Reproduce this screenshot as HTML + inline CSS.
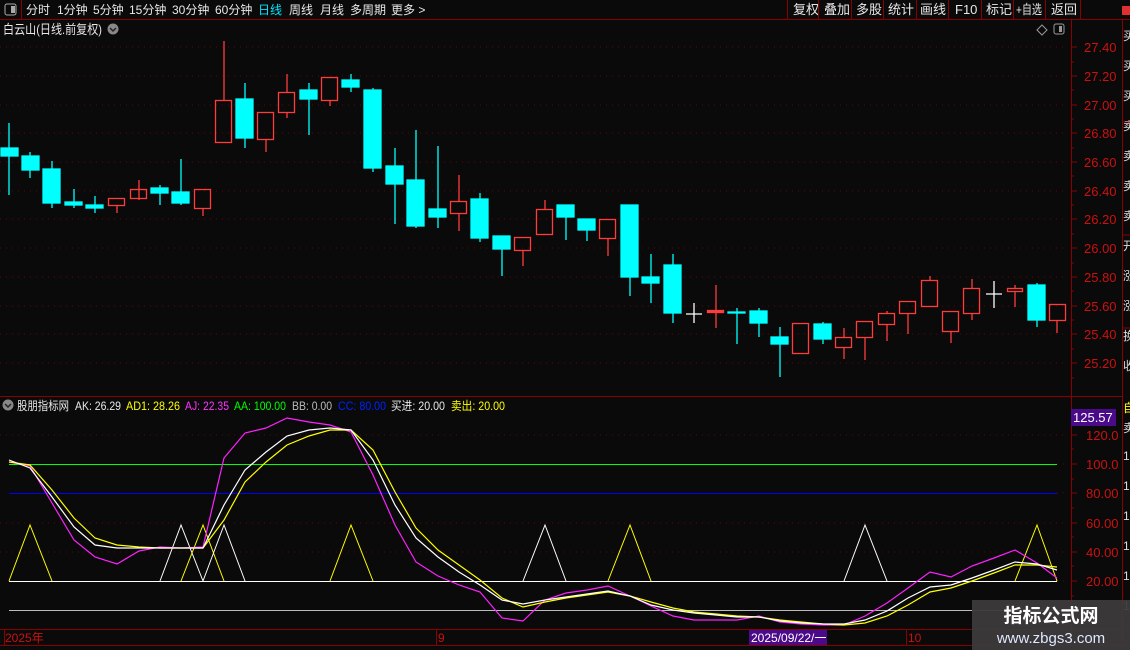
<!DOCTYPE html><html><head><meta charset="utf-8"><style>
body{margin:0;background:#0a0a0a;width:1130px;height:650px;overflow:hidden;font-family:"Liberation Sans","Noto Sans CJK SC",sans-serif}
svg{display:block}
</style></head><body>
<svg width="1130" height="650" xmlns="http://www.w3.org/2000/svg" font-family="Liberation Sans, Noto Sans CJK SC, sans-serif">
<rect width="1130" height="650" fill="#0a0a0a"/>
<line x1="0" y1="19.5" x2="1130" y2="19.5" stroke="#8a0000"/>
<line x1="21.5" y1="0" x2="21.5" y2="19" stroke="#8a0000"/>
<rect x="5" y="4" width="11" height="11" rx="2" fill="none" stroke="#aaa"/><rect x="11" y="6" width="4" height="7" fill="#aaa"/>
<g font-size="12" fill="#e8e8e8">
<text x="26" y="14">分时</text><text x="57" y="14">1分钟</text><text x="93" y="14">5分钟</text><text x="129" y="14">15分钟</text><text x="172" y="14">30分钟</text><text x="215" y="14">60分钟</text>
<text x="258" y="14" fill="#00e5ff">日线</text><text x="289" y="14">周线</text><text x="320" y="14">月线</text><text x="350" y="14">多周期</text><text x="391" y="14">更多 &gt;</text>
</g>
<g font-size="13" fill="#e8e8e8">
<text x="793" y="14">复权</text><text x="824" y="14">叠加</text><text x="856" y="14">多股</text><text x="888" y="14">统计</text><text x="920" y="14">画线</text><text x="955" y="14">F10</text><text x="986" y="14">标记</text><text x="1016" y="14" textLength="26" lengthAdjust="spacingAndGlyphs">+自选</text><text x="1051" y="14">返回</text>
</g>
<g stroke="#8a0000"><line x1="787.5" y1="0" x2="787.5" y2="19"/><line x1="818.5" y1="0" x2="818.5" y2="19"/><line x1="851.5" y1="0" x2="851.5" y2="19"/><line x1="883.5" y1="0" x2="883.5" y2="19"/><line x1="916.5" y1="0" x2="916.5" y2="19"/><line x1="948.5" y1="0" x2="948.5" y2="19"/><line x1="981.5" y1="0" x2="981.5" y2="19"/><line x1="1013.5" y1="0" x2="1013.5" y2="19"/><line x1="1045.5" y1="0" x2="1045.5" y2="19"/><line x1="1080.5" y1="0" x2="1080.5" y2="19"/></g>
<rect x="1122" y="6" width="8" height="9" fill="#e03030"/>
<text x="3" y="34" font-size="13" fill="#e8e8e8" textLength="99" lengthAdjust="spacingAndGlyphs">白云山(日线.前复权)</text>
<circle cx="113" cy="29" r="5.5" fill="#888"/><path d="M110 28l3 3 3-3" stroke="#222" fill="none" stroke-width="1.5"/>
<path d="M1042 25l5 5-5 5-5-5z" fill="none" stroke="#999"/>
<rect x="1054" y="24" width="10" height="10" rx="2" fill="none" stroke="#999"/><rect x="1059" y="26" width="3" height="6" fill="#999"/>
<line x1="1071.5" y1="20" x2="1071.5" y2="645" stroke="#8a0000"/>
<line x1="1122.5" y1="20" x2="1122.5" y2="645" stroke="#8a0000"/>
<line x1="0" y1="396.5" x2="1122" y2="396.5" stroke="#8a0000"/>
<line x1="0" y1="629.5" x2="1122" y2="629.5" stroke="#8a0000"/>
<line x1="0" y1="645.5" x2="1130" y2="645.5" stroke="#8a0000"/>
<g stroke="#6a0000" stroke-dasharray="1 5">
<line x1="0" y1="47" x2="1068" y2="47"/><line x1="0" y1="76" x2="1068" y2="76"/><line x1="0" y1="105" x2="1068" y2="105"/><line x1="0" y1="133" x2="1068" y2="133"/><line x1="0" y1="162" x2="1068" y2="162"/><line x1="0" y1="191" x2="1068" y2="191"/><line x1="0" y1="219" x2="1068" y2="219"/><line x1="0" y1="248" x2="1068" y2="248"/><line x1="0" y1="277" x2="1068" y2="277"/><line x1="0" y1="306" x2="1068" y2="306"/><line x1="0" y1="334" x2="1068" y2="334"/><line x1="0" y1="363" x2="1068" y2="363"/>
</g>
<g font-size="13" fill="#cc1010">
<text x="1084" y="52">27.40</text><text x="1084" y="81">27.20</text><text x="1084" y="110">27.00</text><text x="1084" y="138">26.80</text><text x="1084" y="167">26.60</text><text x="1084" y="196">26.40</text><text x="1084" y="224">26.20</text><text x="1084" y="253">26.00</text><text x="1084" y="282">25.80</text><text x="1084" y="311">25.60</text><text x="1084" y="339">25.40</text><text x="1084" y="368">25.20</text>
</g>
<g stroke="#8a0000"><path d="M1071 47h6M1071 62h3M1071 76h6M1071 90h3M1071 105h6M1071 119h3M1071 133h6M1071 148h3M1071 162h6M1071 176h3M1071 191h6M1071 205h3M1071 219h6M1071 234h3M1071 248h6M1071 263h3M1071 277h6M1071 291h3M1071 306h6M1071 320h3M1071 334h6M1071 349h3M1071 363h6M1071 378h3"/></g>
<g font-size="12" fill="#ddd"><text x="1123" y="40">买</text><text x="1123" y="70">买</text><text x="1123" y="100">买</text><text x="1123" y="130">卖</text><text x="1123" y="160">卖</text><text x="1123" y="190">卖</text><text x="1123" y="220">卖</text><text x="1123" y="250">开</text><text x="1123" y="280">涨</text><text x="1123" y="310">涨</text><text x="1123" y="340">换</text><text x="1123" y="370">收</text></g>
<g stroke="#8a0000"><line x1="1122" y1="122" x2="1130" y2="122"/><line x1="1122" y1="235" x2="1130" y2="235"/><line x1="1122" y1="328" x2="1130" y2="328"/></g>
<g stroke="#00ffff" fill="#00ffff" stroke-width="1.3">
<line x1="9" y1="123" x2="9" y2="195"/><rect x="1" y="148" width="17" height="8"/>
<line x1="30" y1="152" x2="30" y2="178"/><rect x="22" y="156" width="17" height="14"/>
<line x1="52" y1="161" x2="52" y2="208"/><rect x="43" y="169" width="17" height="34"/>
<line x1="74" y1="189" x2="74" y2="208"/><rect x="65" y="202" width="17" height="3"/>
<line x1="95" y1="196" x2="95" y2="213"/><rect x="86" y="205" width="17" height="3"/>
<line x1="160" y1="185" x2="160" y2="205"/><rect x="151" y="188" width="17" height="5"/>
<line x1="181" y1="159" x2="181" y2="205"/><rect x="172" y="192" width="17" height="11"/>
<line x1="245" y1="83" x2="245" y2="148"/><rect x="236" y="99" width="17" height="39"/>
<line x1="309" y1="83" x2="309" y2="135"/><rect x="300" y="90" width="17" height="9"/>
<line x1="351" y1="74" x2="351" y2="92"/><rect x="342" y="80" width="17" height="7"/>
<line x1="373" y1="88" x2="373" y2="172"/><rect x="364" y="90" width="17" height="78"/>
<line x1="395" y1="148" x2="395" y2="224"/><rect x="386" y="166" width="17" height="18"/>
<line x1="416" y1="130" x2="416" y2="228"/><rect x="407" y="180" width="17" height="46"/>
<line x1="438" y1="146" x2="438" y2="228"/><rect x="429" y="209" width="17" height="8"/>
<line x1="480" y1="193" x2="480" y2="242"/><rect x="471" y="199" width="17" height="39"/>
<line x1="502" y1="236" x2="502" y2="276"/><rect x="493" y="236" width="17" height="13"/>
<line x1="566" y1="205" x2="566" y2="240"/><rect x="557" y="205" width="17" height="12"/>
<line x1="587" y1="219" x2="587" y2="241"/><rect x="578" y="219" width="17" height="11"/>
<line x1="630" y1="205" x2="630" y2="296"/><rect x="621" y="205" width="17" height="72"/>
<line x1="651" y1="254" x2="651" y2="303"/><rect x="642" y="277" width="17" height="6"/>
<line x1="673" y1="254" x2="673" y2="323"/><rect x="664" y="265" width="17" height="48"/>
<line x1="737" y1="308" x2="737" y2="344"/><rect x="728" y="312" width="17" height="1"/>
<line x1="759" y1="308" x2="759" y2="337"/><rect x="750" y="311" width="17" height="12"/>
<line x1="780" y1="327" x2="780" y2="377"/><rect x="771" y="337" width="17" height="7"/>
<line x1="823" y1="322" x2="823" y2="344"/><rect x="814" y="324" width="17" height="15"/>
<line x1="1037" y1="283" x2="1037" y2="327"/><rect x="1028" y="285" width="17" height="35"/>
</g>
<g stroke="#ff3c3c" fill="none" stroke-width="1.3">
<line x1="117" y1="205" x2="117" y2="213"/><rect x="108.5" y="198.5" width="16" height="7"/>
<line x1="139" y1="180" x2="139" y2="200"/><rect x="130.5" y="189.5" width="16" height="9"/>
<line x1="203" y1="208" x2="203" y2="216"/><rect x="194.5" y="189.5" width="16" height="19"/>
<line x1="224" y1="41" x2="224" y2="100"/><rect x="215.5" y="100.5" width="16" height="42"/>
<line x1="266" y1="139" x2="266" y2="152"/><rect x="257.5" y="112.5" width="16" height="27"/>
<line x1="287" y1="74" x2="287" y2="92"/><line x1="287" y1="112" x2="287" y2="118"/><rect x="278.5" y="92.5" width="16" height="20"/>
<line x1="330" y1="100" x2="330" y2="106"/><rect x="321.5" y="77.5" width="16" height="23"/>
<line x1="459" y1="175" x2="459" y2="201"/><line x1="459" y1="213" x2="459" y2="231"/><rect x="450.5" y="201.5" width="16" height="12"/>
<line x1="523" y1="250" x2="523" y2="266"/><rect x="514.5" y="237.5" width="16" height="13"/>
<line x1="545" y1="200" x2="545" y2="209"/><rect x="536.5" y="209.5" width="16" height="25"/>
<line x1="608" y1="238" x2="608" y2="256"/><rect x="599.5" y="219.5" width="16" height="19"/>
<line x1="716" y1="285" x2="716" y2="328"/><rect x="707.5" y="310.5" width="16" height="2" fill="#ff3c3c"/>
<rect x="792.5" y="323.5" width="16" height="30"/>
<line x1="844" y1="328" x2="844" y2="337"/><line x1="844" y1="347" x2="844" y2="359"/><rect x="835.5" y="337.5" width="16" height="10"/>
<line x1="865" y1="337" x2="865" y2="360"/><rect x="856.5" y="321.5" width="16" height="16"/>
<line x1="887" y1="311" x2="887" y2="313"/><line x1="887" y1="324" x2="887" y2="341"/><rect x="878.5" y="313.5" width="16" height="11"/>
<line x1="908" y1="313" x2="908" y2="334"/><rect x="899.5" y="301.5" width="16" height="12"/>
<line x1="930" y1="276" x2="930" y2="280"/><rect x="921.5" y="280.5" width="16" height="26"/>
<line x1="951" y1="331" x2="951" y2="343"/><rect x="942.5" y="311.5" width="16" height="20"/>
<line x1="972" y1="279" x2="972" y2="288"/><line x1="972" y1="313" x2="972" y2="320"/><rect x="963.5" y="288.5" width="16" height="25"/>
<line x1="1015" y1="285" x2="1015" y2="289"/><line x1="1015" y1="291" x2="1015" y2="307"/><rect x="1007.5" y="288.5" width="15" height="3"/>
<line x1="1057" y1="320" x2="1057" y2="333"/><rect x="1049.5" y="304.5" width="16" height="16"/>
</g>
<g stroke="#fff" stroke-width="1.3"><path d="M694 303v20M686 314h16M994 281v27M986 294h16"/></g>
<circle cx="8" cy="405" r="5.5" fill="#888"/><path d="M5 404l3 3 3-3" stroke="#222" fill="none" stroke-width="1.5"/>
<g font-size="12"><text x="17" y="410" fill="#e8e8e8" textLength="52" lengthAdjust="spacingAndGlyphs">股朋指标网</text><text x="75" y="410" fill="#e8e8e8" textLength="46" lengthAdjust="spacingAndGlyphs">AK: 26.29</text><text x="126" y="410" fill="#ffff00" textLength="54" lengthAdjust="spacingAndGlyphs">AD1: 28.26</text><text x="185" y="410" fill="#ff33ff" textLength="44" lengthAdjust="spacingAndGlyphs">AJ: 22.35</text><text x="234" y="410" fill="#00ff00" textLength="52" lengthAdjust="spacingAndGlyphs">AA: 100.00</text><text x="292" y="410" fill="#bbb" textLength="40" lengthAdjust="spacingAndGlyphs">BB: 0.00</text><text x="338" y="410" fill="#0022ff" textLength="48" lengthAdjust="spacingAndGlyphs">CC: 80.00</text><text x="391" y="410" fill="#e8e8e8" textLength="54" lengthAdjust="spacingAndGlyphs">买进: 20.00</text><text x="451" y="410" fill="#ffff00" textLength="54" lengthAdjust="spacingAndGlyphs">卖出: 20.00</text></g>
<g stroke="#6a0000" stroke-dasharray="1 5"><line x1="0" y1="435" x2="1068" y2="435"/><line x1="0" y1="523" x2="1068" y2="523"/><line x1="0" y1="552" x2="1068" y2="552"/><line x1="1057" y1="464" x2="1068" y2="464"/><line x1="1057" y1="493" x2="1068" y2="493"/><line x1="1057" y1="581" x2="1068" y2="581"/></g>
<rect x="1071" y="409" width="45" height="17" fill="#4a0a8a"/><text x="1073" y="422" font-size="13" fill="#fff">125.57</text>
<g font-size="13" fill="#cc1010"><text x="1086" y="440">120.0</text><text x="1086" y="469">100.0</text><text x="1086" y="498">80.00</text><text x="1086" y="528">60.00</text><text x="1086" y="557">40.00</text><text x="1086" y="586">20.00</text></g>
<g stroke="#8a0000"><path d="M1071 435h6M1071 449h3M1071 464h6M1071 479h3M1071 493h6M1071 508h3M1071 523h6M1071 537h3M1071 552h6M1071 566h3M1071 581h6M1071 596h3"/></g>
<g font-size="12" fill="#ddd"><text x="1123" y="432">卖</text><text x="1123" y="460">1</text><text x="1123" y="490">1</text><text x="1123" y="520">1</text><text x="1123" y="550">1</text><text x="1123" y="580">1</text><text x="1123" y="610">1</text></g>
<text x="1123" y="412" font-size="12" fill="#ffff00">自</text>
<line x1="9" y1="464.5" x2="1057" y2="464.5" stroke="#00ff00"/>
<line x1="9" y1="493.5" x2="1057" y2="493.5" stroke="#0000ff"/>
<line x1="9" y1="581.5" x2="1057" y2="581.5" stroke="#fff"/>
<line x1="9" y1="610.5" x2="1068" y2="610.5" stroke="#bbb"/>
<g fill="none" stroke-width="1">
<path d="M9 581L30 525L52 581" stroke="#ffff00"/>
<path d="M160 581L181 525L203 581" stroke="#fff"/>
<path d="M181 581L203 525L224 581" stroke="#ffff00"/>
<path d="M203 581L224 525L245 581" stroke="#fff"/>
<path d="M330 581L351 525L373 581" stroke="#ffff00"/>
<path d="M523 581L545 525L566 581" stroke="#fff"/>
<path d="M608 581L630 525L651 581" stroke="#ffff00"/>
<path d="M844 581L865 525L887 581" stroke="#fff"/>
<path d="M1015 581L1037 525L1057 581" stroke="#ffff00"/>
</g>
<g fill="none" stroke-width="1.2">
<polyline stroke="#ff22ff" points="9,462 30,466 52,503 74,540 95,557 117,564 139,551 160,547 181,548 203,547 224,458 245,433 266,428 287,418 309,422 330,425 351,432 373,475 395,525 416,562 438,576 459,585 480,592 502,618 523,621 545,600 566,593 587,590 608,586 630,596 651,606 673,616 694,620 716,620 737,620 759,616 780,622 801,624 823,625 844,625 865,616 887,603 908,588 930,572 951,577 972,566 994,558 1015,550 1037,563 1057,578"/>
<polyline stroke="#ffff00" points="9,462 30,465 52,490 74,518 95,538 117,545 139,547 160,548 181,548 203,548 224,520 245,482 266,462 287,445 309,436 330,430 351,430 373,450 395,492 416,528 438,550 459,565 480,580 502,598 523,607 545,602 566,598 587,595 608,592 630,596 651,602 673,608 694,612 716,614 737,616 759,617 780,620 801,622 823,624 844,625 865,623 887,616 908,605 930,592 951,588 972,581 994,573 1015,565 1037,565 1057,567"/>
<polyline stroke="#fff" points="9,460 30,468 52,497 74,527 95,545 117,548 139,548 160,548 181,548 203,548 224,505 245,470 266,452 287,436 309,430 330,428 351,430 373,460 395,505 416,538 438,557 459,572 480,585 502,600 523,604 545,600 566,597 587,594 608,591 630,596 651,605 673,610 694,613 716,615 737,617 759,617 780,621 801,623 823,624 844,624 865,620 887,611 908,598 930,587 951,585 972,578 994,570 1015,562 1037,564 1057,570"/>
</g>
<g font-size="12" fill="#cc1010"><text x="5" y="642">2025年</text><text x="438" y="642">9</text><text x="908" y="642">10</text></g>
<g stroke="#8a0000"><line x1="4.5" y1="630" x2="4.5" y2="645"/><line x1="436.5" y1="630" x2="436.5" y2="645"/><line x1="906.5" y1="630" x2="906.5" y2="645"/></g>
<rect x="749" y="630" width="78" height="15" fill="#4a0a8a"/><text x="751" y="642" font-size="12" fill="#fff">2025/09/22/一</text>
<rect x="972" y="600" width="158" height="50" fill="#3c3a3a" opacity="0.95"/>
<text x="1051" y="622" font-size="19" font-weight="bold" fill="#fff" text-anchor="middle">指标公式网</text>
<text x="1051" y="643" font-size="15" fill="#dfe8ff" text-anchor="middle">www.zbgs3.com</text>
</svg>
</body></html>
